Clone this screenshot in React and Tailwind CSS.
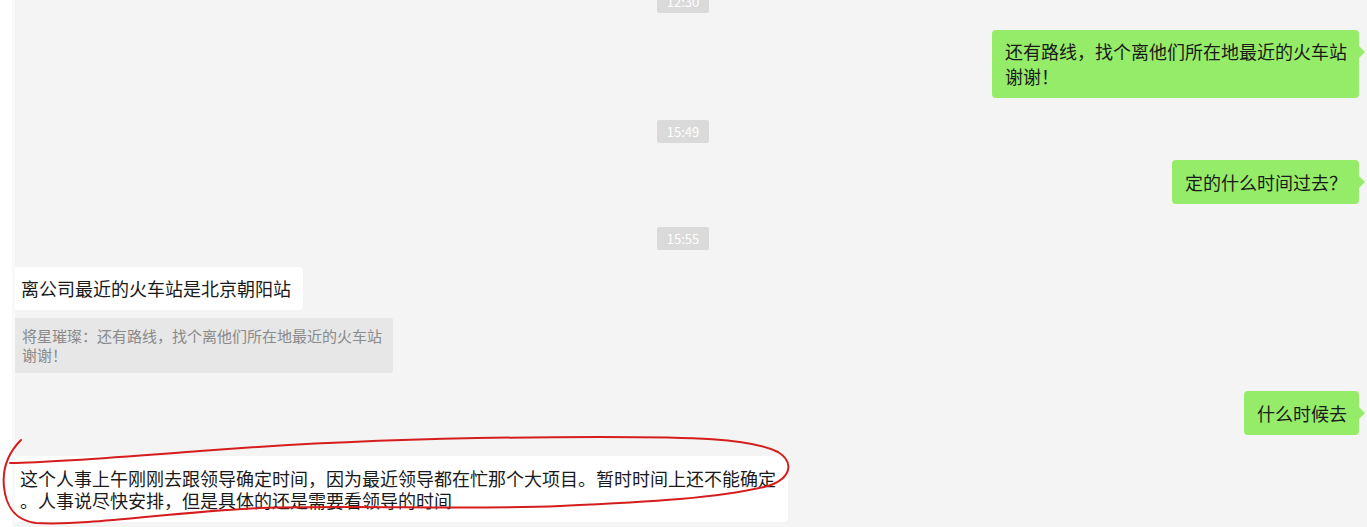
const FONT = { fontFamily: "'Microsoft YaHei', 'Noto Sans CJK SC', 'Noto Sans', sans-serif" };

function Time({ children, className = "" }) {
  return (
    <div
      className={`ml-[642px] self-start w-[52px] h-[23px] rounded-[2px] bg-[#dadada] text-white text-[13px] leading-[23px] text-center ${className}`}
    >
      {children}
    </div>
  );
}

function Mine({ children, className = "" }) {
  return (
    <div className={`self-end relative rounded-[4px] bg-[#95ec69] text-[#1a1a1a] text-[18px] ${className}`}>
      {children}
      <span className="absolute right-[-6px] top-[16px] w-0 h-0 border-y-[6px] border-y-transparent border-l-[6px] border-l-[#95ec69]" />
    </div>
  );
}

export default function App() {
  return (
    <div className="relative w-[1367px] h-[527px] overflow-hidden flex bg-[#f4f4f4]" style={FONT}>
      <div className="w-[12px] shrink-0 bg-white" />
      <div className="w-[3px] shrink-0 bg-[#f9f9f9]" />

      <div className="flex-1 flex flex-col pr-[8px]">
        <Time className="-mt-[10px]">12:30</Time>

        <Mine className="mt-[17px] w-[367px] pl-[13px] pr-[10px] pt-[9px] pb-[9px] leading-[25px]">
          还有路线，找个离他们所在地最近的火车站
          <br />
          谢谢！
        </Mine>

        <Time className="mt-[22px]">15:49</Time>

        <Mine className="mt-[17px] h-[44px] pl-[13px] pr-[12px] leading-[44px]">定的什么时间过去？</Mine>

        <Time className="mt-[23px]">15:55</Time>

        <div className="mt-[17px] self-start h-[43px] pl-[6px] pr-[12px] bg-white rounded-r-[4px] text-[18px] leading-[43px] text-[#1a1a1a]">
          离公司最近的火车站是北京朝阳站
        </div>

        <div className="mt-[8px] self-start w-[378px] h-[55px] pl-[7px] pr-[6px] pt-[8px] bg-[#e7e7e7] rounded-r-[2px] text-[15px] leading-[19px] text-[#8a8a8a]">
          将星璀璨：还有路线，找个离他们所在地最近的火车站
          <br />
          谢谢！
        </div>

        <Mine className="mt-[18px] h-[44px] pl-[13px] pr-[12px] leading-[44px]">什么时候去</Mine>

        <div className="mt-[21px] self-start w-[773px] pl-[5px] pr-[4px] py-[11px] bg-white rounded-r-[4px] text-[18px] leading-[22px] text-[#1a1a1a] whitespace-nowrap">
          这个人事上午刚刚去跟领导确定时间，因为最近领导都在忙那个大项目。暂时时间上还不能确定
          <br />
          。人事说尽快安排，但是具体的还是需要看领导的时间
        </div>
      </div>

      <svg className="absolute inset-0 pointer-events-none" width="1367" height="527" aria-hidden>
        <path
          d="M21 440 C 9 452, 2 468, 4 487 C 6 506, 14 520, 36 523 C 90 526, 170 512, 260 508 C 360 505, 470 510, 560 506 C 650 502, 720 498, 768 486 C 792 478, 794 462, 778 452 C 750 438, 690 437, 600 437 C 470 437, 330 441, 200 451 C 120 457, 60 462, 10 463"
          fill="none"
          stroke="#d51d1d"
          strokeWidth="2"
          strokeLinecap="round"
        />
      </svg>
    </div>
  );
}
